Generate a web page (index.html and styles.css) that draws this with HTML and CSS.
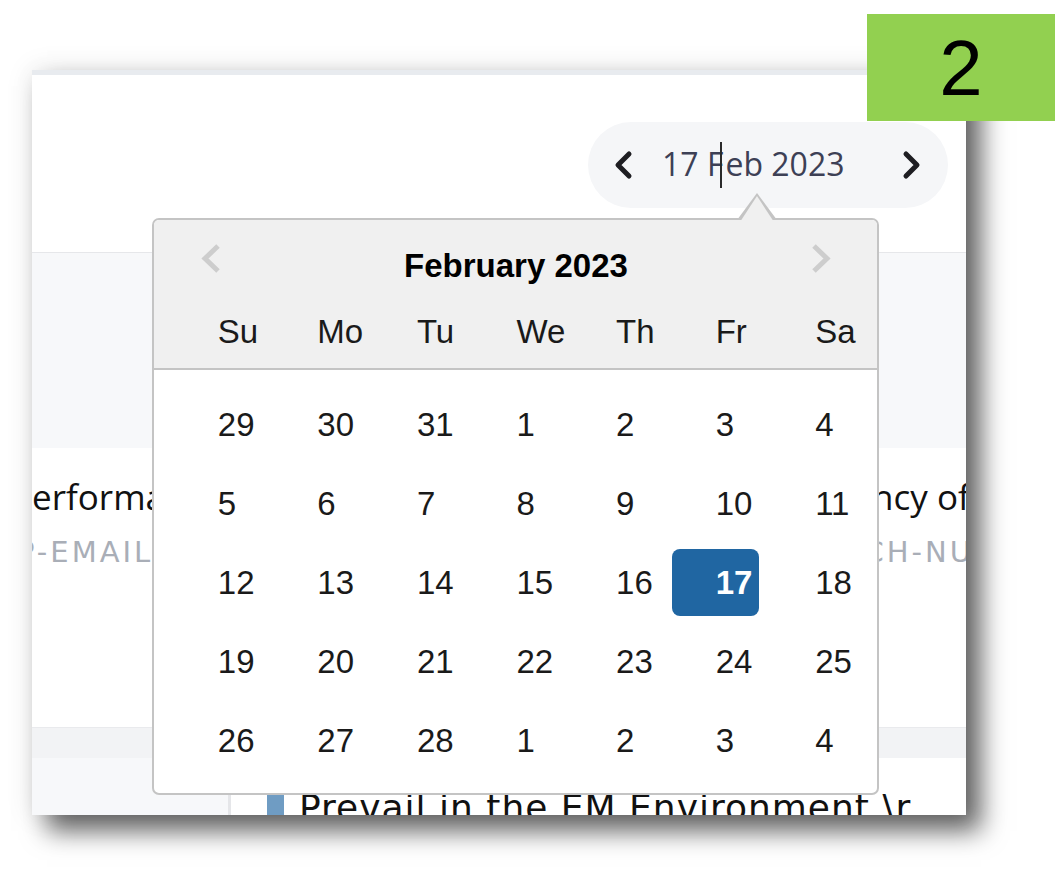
FILE: index.html
```html
<!DOCTYPE html>
<html lang="en">
  <head>
    <meta charset="UTF-8" />
    <meta name="viewport" content="width=device-width, initial-scale=1.0" />
    <title>Date picker step 2</title>
    <link rel="stylesheet" href="styles.css">
  </head>
  <body>
    <div class="step-badge">2</div>

    <main class="shot">
      <header class="toolbar">
        <div class="date-nav">
          <svg class="nav-arrow" width="24" height="30" viewBox="0 0 24 30">
            <polyline points="18,4 7,15 18,26" />
          </svg>
          <span class="date-text">17 F<span class="cursor"></span>eb 2023</span>
          <svg class="nav-arrow next" width="24" height="30" viewBox="0 0 24 30">
            <polyline points="6,4 17,15 6,26" />
          </svg>
        </div>
      </header>

      <section class="filters"></section>

      <section class="cards">
        <div class="card card-left">
          <div class="card-title">Performance Management</div>
          <div class="card-code">P-EMAIL-REMINDER</div>
        </div>
        <div class="card card-right">
          <div class="card-title">Efficiency of Operations</div>
          <div class="card-code">IT-TECH-NUMBER</div>
        </div>
      </section>

      <div class="divider-band"></div>

      <section class="list-row">
        <aside class="side"></aside>
        <div class="list">
          <div class="list-item">
            <span class="list-bar"></span>
            <span class="list-text">Prevail in the EM Environment \r</span>
          </div>
        </div>
      </section>

      <!-- open datepicker popup -->
      <div class="datepicker">
        <div class="dp-head">
          <div class="dp-title-row">
            <svg class="dp-arrow" width="22" height="31" viewBox="0 0 22 31">
              <polyline points="18,3 5,15.5 18,28" />
            </svg>
            <div class="dp-title">February 2023</div>
            <svg class="dp-arrow" width="22" height="31" viewBox="0 0 22 31">
              <polyline points="4,3 17,15.5 4,28" />
            </svg>
          </div>
          <div class="dp-week">
            <span>Su</span><span>Mo</span><span>Tu</span><span>We</span><span>Th</span><span>Fr</span><span>Sa</span>
          </div>
        </div>
        <div class="dp-days" id="days"></div>
      </div>
    </main>

    <script>
      // Build the February 2023 grid, with the overflow days of Jan and Mar
      const days = [29, 30, 31];
      for (let d = 1; d <= 28; d++) days.push(d);
      days.push(1, 2, 3, 4);

      const grid = document.getElementById("days");
      days.forEach((d, i) => {
        const cell = document.createElement("span");
        cell.className = "day";
        if (i === 19) cell.classList.add("active");
        cell.textContent = d;
        grid.appendChild(cell);
      });
    </script>
  </body>
</html>
```

FILE: styles.css
```css
*,
*::before,
*::after {
  box-sizing: border-box;
}

body {
  margin: 0;
  width: 1055px;
  height: 881px;
  overflow: hidden;
  background: #fff;
  font-family: "Liberation Sans", Arial, sans-serif;
  color: #1a1a1a;
}

.step-badge {
  position: absolute;
  top: 14px;
  left: 867px;
  z-index: 5;
  width: 188px;
  height: 107px;
  display: flex;
  align-items: center;
  justify-content: center;
  background: #92d050;
  color: #000;
  font-size: 78px;
  line-height: 1;
}

/* The cropped screenshot with its drop shadow */
.shot {
  position: relative;
  margin: 70px 0 0 32px;
  width: 934px;
  height: 745px;
  overflow: hidden;
  background: #fff;
  box-shadow: 15px 16px 24px rgba(0, 0, 0, 0.6), 0 0 26px rgba(0, 0, 0, 0.1);
}

.toolbar {
  border-top: 5px solid #e8ebef;
  padding: 47px 18px 44px;
  display: flex;
  justify-content: flex-end;
}

.date-nav {
  width: 360px;
  height: 86px;
  border-radius: 43px;
  background: #f5f6f8;
  display: flex;
  align-items: center;
  padding-left: 23px;
}

.nav-arrow {
  flex: none;
}

.nav-arrow polyline {
  fill: none;
  stroke: #1e1e22;
  stroke-width: 5;
  stroke-linecap: round;
  stroke-linejoin: round;
}

.nav-arrow.next {
  margin-left: 48px;
}

.date-text {
  width: 190px;
  margin-left: 27px;
  white-space: nowrap;
  font-family: "Open Sans", sans-serif;
  font-size: 32px;
  font-weight: 500;
  color: #3d4055;
}

.cursor {
  display: inline-block;
  width: 0;
  height: 46px;
  margin-left: -3px;
  margin-right: 3px;
  border-left: 2px solid #2a2a2a;
  vertical-align: -12px;
}

.filters {
  height: 196px;
  border-top: 1px solid #e6e7ea;
  background: #f7f8fa;
}

.cards {
  height: 279px;
  display: flex;
  white-space: nowrap;
}

.card {
  padding-top: 26px;
  font-family: "Open Sans", sans-serif;
}

.card-left {
  flex: none;
  width: 764px;
  margin-left: -21px;
}

.card-right {
  flex: 1;
}

.card-title {
  font-size: 35px;
  line-height: 46px;
  color: #111;
}

.card-code {
  margin-top: 12px;
  font-family: "DejaVu Sans", sans-serif;
  font-size: 29px;
  line-height: 40px;
  letter-spacing: 3px;
  color: #a9aeb7;
}

.card-left .card-code {
  margin-left: 6px;
}

.card-right .card-code {
  margin-left: 6px;
}

.divider-band {
  height: 31px;
  border-top: 1px solid #e9eaed;
  background: #f2f3f5;
}

.list-row {
  display: flex;
  height: 57px;
}

.side {
  width: 199px;
  background: #f7f8fa;
  border-right: 3px solid #e5e6e9;
}

.list {
  padding: 27px 0 0 36px;
}

.list-item {
  display: flex;
  white-space: nowrap;
}

.list-bar {
  width: 17px;
  margin-top: 10px;
  background: #6f9cc3;
}

.list-text {
  margin-left: 15px;
  font-family: "DejaVu Sans", sans-serif;
  font-size: 36px;
  line-height: 46px;
  letter-spacing: 1px;
  color: #111;
}

/* Datepicker popup */
.datepicker {
  position: absolute;
  left: 120px;
  top: 148px;
  width: 727px;
  height: 577px;
  border: 2px solid #c4c4c4;
  border-radius: 7px;
  background: #fff;
  font-size: 33px;
}

.datepicker::before,
.datepicker::after {
  content: "";
  position: absolute;
  border-style: solid;
  border-color: transparent;
}

.datepicker::before {
  top: -27px;
  left: 583px;
  border-width: 0 20px 27px;
  border-bottom-color: #c4c4c4;
}

.datepicker::after {
  top: -24px;
  left: 586px;
  border-width: 0 17px 26px;
  border-bottom-color: #f0f0f0;
}

.dp-head {
  height: 150px;
  padding-top: 11px;
  background: #f0f0f0;
  border-bottom: 2px solid #c4c4c4;
  border-radius: 5px 5px 0 0;
}

.dp-title-row {
  display: flex;
  align-items: flex-start;
  height: 70px;
  padding: 0 45px 0 46px;
}

.dp-arrow {
  flex: none;
  margin-top: 12px;
}

.dp-arrow polyline {
  fill: none;
  stroke: #cdcdcd;
  stroke-width: 5;
}

.dp-title {
  flex: 1;
  text-align: center;
  line-height: 70px;
  font-weight: bold;
  color: #000;
}

.dp-week {
  display: grid;
  grid-template-columns: repeat(7, 1fr);
  margin-top: 2px;
  padding: 0 12px 0 14px;
  line-height: 58px;
}

.dp-week span {
  padding-left: 50%;
}

.dp-days {
  display: grid;
  grid-template-columns: repeat(7, 1fr);
  grid-auto-rows: 79px;
  padding: 15px 12px 0 14px;
}

.day {
  margin: 6px;
  height: 67px;
  line-height: 67px;
  padding-left: calc(50% - 6px);
  border-radius: 8px;
  white-space: nowrap;
}

.day.active {
  background: #2066a2;
  color: #fff;
  font-weight: bold;
}
```
